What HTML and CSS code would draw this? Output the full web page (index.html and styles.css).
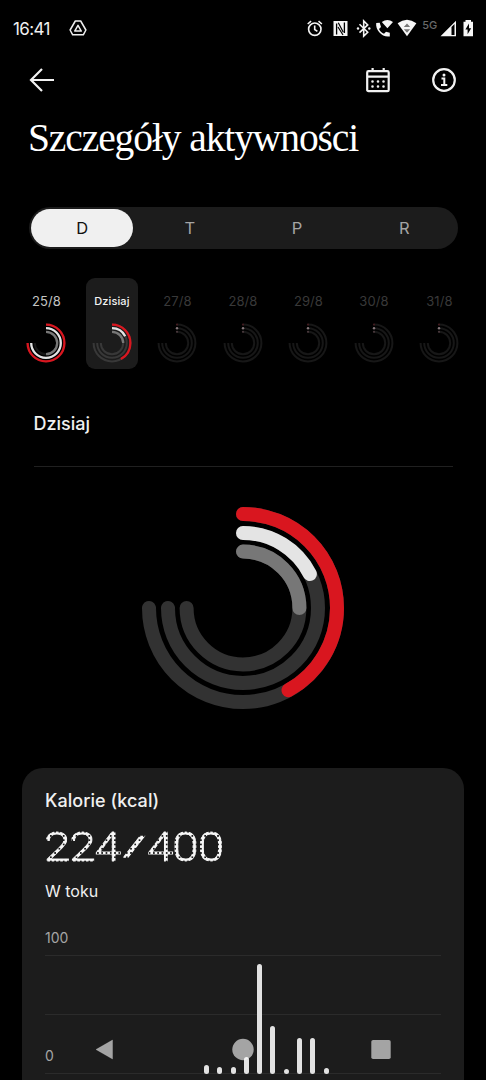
FILE: index.html
```html
<!DOCTYPE html>
<html lang="pl">
<head>
<meta charset="utf-8">
<meta name="viewport" content="width=device-width, initial-scale=1">
<title>Szczegóły aktywności</title>
<link rel="stylesheet" href="styles.css">
</head>
<body>
<svg class="defs" aria-hidden="true">
  <symbol id="tracks" viewBox="0 0 40 40">
    <g class="tracks" transform="rotate(-90 20 20)">
      <circle cx="20" cy="20" r="18.4" pathLength="360"/>
      <circle cx="20" cy="20" r="14.8" pathLength="360"/>
      <circle cx="20" cy="20" r="11.2" pathLength="360"/>
    </g>
  </symbol>
  <symbol id="idle" viewBox="0 0 40 40">
    <use href="#tracks"/>
    <circle cx="20" cy="1.6" r="1.1" fill="#421c20"/>
    <circle cx="20" cy="5.2" r="1.2" fill="#85777b"/>
    <circle cx="20" cy="8.8" r="1.1" fill="#49393d"/>
  </symbol>
</svg>
<div class="screen">
  <header class="status">
    <span class="clock">16:41</span>
    <svg class="drive" width="18" height="16" viewBox="0 0 18 16"><path d="M6.3 1h5.4l5.2 9-2.6 4.8H3.7L1.1 10z"/><path d="M9 5.3l3.3 5.8H5.7z"/></svg>
    <svg class="icons" width="190" height="24" viewBox="290 16 190 24">
      <g class="line"><circle cx="314.8" cy="29.2" r="6.2"/><path d="M314.7 25.5v4l2.7 1.8M307.7 24l3.4-2.8M321.9 24l-3.4-2.8"/></g>
      <path class="solid" d="M333.5 21h14v15h-14z"/>
      <path class="cut" d="M336.6 34.5V23.5M344.4 33V22.5"/>
      <path class="cut slant" d="M338.3 22.8l5 9.5M338 27l5 8"/>
      <g class="line"><path d="M359.5 24.3l8.2 8-4 3.8V21l4 3.9-8.2 7.8"/></g>
      <circle class="solid" cx="358" cy="28.5" r="1.2"/><circle class="solid" cx="369.3" cy="28.5" r="1.2"/>
      <path class="solid" d="M376.2 23l3.5-.3 1.3 4.2-2 2c1.2 2.4 2.8 3.9 5 4.9l2-2 3.8.9v3.7c-7.3 1.4-14.6-6-13.6-13.4zM381.8 22q5.6-4 11.2 0l-5.6 6.3z"/>
      <path class="solid" d="M397.6 23.2q9.4-7 18.8 0L407 36.3z"/>
      <path class="tri" d="M403.8 27l3.2-3.6 3.2 3.6zM403.8 29.3h6.4l-3.2 3.5z"/>
      <text class="net" x="422.3" y="29">5G</text>
      <path class="solid" fill-rule="evenodd" d="M440.5 36.3L456 20.8v15.5zM451.5 27v8h3V24z"/>
      <path class="solid" d="M465.5 20h5.5v1.8h2V36.3h-9.5V21.8h2z"/>
      <path class="cut fill" d="M469 23.5l-3.6 6h2.2v4.8l3.6-6h-2.2z"/>
    </svg>
  </header>
  <nav class="bar">
    <svg width="26" height="26" viewBox="0 0 26 26"><path d="M25 13H3M13 2L2 13l11 11"/></svg>
    <svg class="cal" width="26" height="26" viewBox="0 0 26 26"><rect x="2.2" y="4.2" width="21.5" height="20" rx="1.3"/><path d="M2.2 9.7h21.5M7.6 1v3M18.7 1v3"/><path class="dots" d="M7.5 14.5h.01M13 14.5h.01M18.5 14.5h.01M7.5 19.5h.01M13 19.5h.01M18.5 19.5h.01"/></svg>
    <svg width="26" height="26" viewBox="0 0 26 26"><circle cx="13" cy="13" r="10.8"/><path class="info" d="M10.5 11.6h2.8v6M10 18h6.3"/><circle class="solid" cx="13" cy="8.1" r="1.5"/></svg>
  </nav>
  <h1 class="title">Szczegóły aktywności</h1>
  <div class="tabs"><span class="tab active">D</span><span class="tab">T</span><span class="tab">P</span><span class="tab">R</span></div>
  <div class="days">
    <div class="day"><span>25/8</span>
      <svg class="mini" viewBox="0 0 40 40"><use href="#tracks"/><g transform="rotate(-90 20 20)" class="arcs"><circle class="red" cx="20" cy="20" r="18.4" pathLength="360" stroke-dasharray="270 360"/><circle class="white" cx="20" cy="20" r="14.8" pathLength="360" stroke-dasharray="270 360"/><circle class="gray" cx="20" cy="20" r="11.2" pathLength="360" stroke-dasharray="180 360"/></g></svg></div>
    <div class="day today"><span>Dzisiaj</span>
      <svg class="mini" viewBox="0 0 40 40"><use href="#tracks"/><g transform="rotate(-90 20 20)" class="arcs"><circle class="red" cx="20" cy="20" r="18.4" pathLength="360" stroke-dasharray="151 360"/><circle class="white" cx="20" cy="20" r="14.8" pathLength="360" stroke-dasharray="63 360"/><circle class="gray" cx="20" cy="20" r="11.2" pathLength="360" stroke-dasharray="90 360"/></g></svg></div>
    <div class="day off"><span>27/8</span><svg class="mini" viewBox="0 0 40 40"><use href="#idle"/></svg></div>
    <div class="day off"><span>28/8</span><svg class="mini" viewBox="0 0 40 40"><use href="#idle"/></svg></div>
    <div class="day off"><span>29/8</span><svg class="mini" viewBox="0 0 40 40"><use href="#idle"/></svg></div>
    <div class="day off"><span>30/8</span><svg class="mini" viewBox="0 0 40 40"><use href="#idle"/></svg></div>
    <div class="day off"><span>31/8</span><svg class="mini" viewBox="0 0 40 40"><use href="#idle"/></svg></div>
  </div>
  <h2 class="heading">Dzisiaj</h2>
  <svg class="ring" width="204" height="204" viewBox="-102 -102 204 204">
    <g transform="rotate(-90)">
      <g class="base"><circle r="94" pathLength="360"/><circle r="75" pathLength="360"/><circle r="56.4" pathLength="360"/></g>
      <circle class="red" r="94" pathLength="360" stroke-dasharray="151 360"/>
      <circle class="white" r="75" pathLength="360" stroke-dasharray="63 360"/>
      <circle class="gray" r="56.4" pathLength="360" stroke-dasharray="90 360"/>
    </g>
  </svg>
  <section class="card">
    <h3 class="name">Kalorie (kcal)</h3>
    <div class="value"><span class="slot"><span class="digits">224</span></span><span class="slot mid"><span class="slash">/</span></span><span class="slot"><span class="digits">400</span></span></div>
    <div class="state">W toku</div>
    <div class="chart">
      <div class="band top"><span>100</span></div>
      <div class="band"></div>
      <div class="band"><span>0</span></div>
      <div class="bars">
        <i style="height:9px"></i><i style="height:7.5px"></i><i style="height:7.5px"></i><i style="height:17px"></i><i style="height:110px"></i><i style="height:48.5px"></i><i style="height:5px"></i><i style="height:36px"></i><i style="height:36px"></i><i style="height:6px"></i>
      </div>
    </div>
  </section>
  <svg class="sysnav" width="486" height="60" viewBox="0 1020 486 60">
    <path d="M96 1049.5L112.500 1040V1059z" class="back"/>
    <circle cx="243" cy="1049.5" r="10.7"/>
    <rect x="371.3" y="1040" width="19.4" height="19" rx="1.8"/>
  </svg>
</div>
</body>
</html>
```
FILE: styles.css
```css
* { box-sizing: border-box; }
html, body { margin: 0; height: 1080px; overflow: hidden; background: #000; }
body { font-family: Inter, "Liberation Sans", sans-serif; color: #f0f0f0; }
svg { display: block; fill: none; flex: none; }
.defs { position: absolute; width: 0; height: 0; }
.screen { position: relative; width: 486px; height: 1080px; overflow: hidden; display: flex; flex-direction: column; }

.status { height: 56px; flex: none; display: flex; align-items: center; padding: 0 6px 0 13px; }
.clock { width: 56px; font-size: 17px; letter-spacing: -0.6px; line-height: 20px; padding-top: 2px; }
.drive { stroke: #eee; stroke-width: 1.5; stroke-linejoin: round; }
.icons { margin-left: auto; }
.line { stroke: #f4f4f4; stroke-width: 1.6; }
.solid { fill: #f6f6f6; stroke: none; }
.cut { stroke: #000; stroke-width: 1.3; }
.slant { stroke-width: 1.2; }
.fill { fill: #000; stroke: none; }
.tri { fill: #777; }
.net { fill: #696969; font-size: 11px; font-weight: 500; }

.bar { height: 50px; flex: none; display: flex; align-items: center; padding: 0 30px 2px 29px; }
.bar svg { stroke: #f2f2f2; stroke-width: 2.2; }
.bar .cal { margin-left: auto; margin-right: 40px; }
.bar svg:last-child { margin-right: -0.5px; }
.bar .dots { stroke-width: 2.6; stroke-linecap: round; }
.bar .info { stroke-width: 2; }
.bar .solid { stroke: none; }

.title { margin: 9px 0 0 28px; height: 49px; flex: none; font: 400 39.5px/46px "Liberation Serif", serif; letter-spacing: -1.1px; white-space: nowrap; color: #fff; }

.tabs { flex: none; margin: 43px 28px 0 29px; height: 42px; border-radius: 21px; background: #1c1c1c; display: grid; grid-template-columns: repeat(4, 1fr); }
.tab { display: flex; align-items: center; justify-content: center; font-size: 16.5px; color: #a4a4a4; }
.active { margin: 2px 3px 2px 2px; border-radius: 20px; background: #f0f0f0; color: #111; }

.days { flex: none; margin: 29px 0 0 13.7px; display: grid; grid-template-columns: repeat(7, 65.5px); justify-items: center; height: 92px; }
.day { width: 52.5px; height: 91px; border-radius: 9px; padding-top: 15px; display: flex; flex-direction: column; align-items: center; gap: 14px; font-size: 13px; line-height: 16px; letter-spacing: 0.1px; color: #c4c4c4; }
.today { background: #1c1c1c; color: #f4f4f4; font-size: 11px; font-weight: 500; --track: #383838; }
.off { color: #393939; }
.mini { width: 40px; height: 40px; overflow: visible; }
.tracks { stroke: var(--track, #171717); stroke-width: 2; stroke-dasharray: 270 360; }
.arcs { stroke-width: 2.3; }
.red { stroke: #d9161f; }
.white { stroke: #e4e4e4; }
.gray { stroke: #777; }

.heading { flex: none; margin: 34px 33px 0 33.5px; height: 63px; padding-top: 8px; border-bottom: 1px solid #202020; font-size: 18px; line-height: 24px; font-weight: 500; }
.ring { margin: 38.5px auto 0; stroke-width: 14; stroke-linecap: round; }
.base { stroke: #323232; stroke-dasharray: 270 360; }

.card { flex: none; margin: 58.5px 22px 0; height: 340px; padding: 21px 23px; border-radius: 21px; background: #1c1c1c; }
.name { margin: 0; font-size: 18px; line-height: 24px; font-weight: 500; letter-spacing: 0.05px; }

/* Digits are filled with a dot grid; six dot columns equal one character advance. */
.value { margin: 15px 0 0 -0.8px; height: 38px; display: flex; font-family: Roboto, sans-serif; line-height: 38px; }
.slot { width: 77.04px; }
.slot.mid { width: 25.68px; }
.digits, .slash {
  display: block; height: 38px; font-kerning: none; color: transparent;
  transform-origin: left; -webkit-background-clip: text; background-clip: text;
}
.digits {
  width: 70px; font-size: 41px; font-weight: 300; letter-spacing: -0.88px;
  transform: scaleX(1.16);
  -webkit-text-stroke: 0.9px transparent;
  background-image: radial-gradient(ellipse 1.95px 2.25px at center, #f8f8f8 88%, transparent 100%);
  background-size: 3.69px 4.28px; background-position: -1.48px -0.62px;
}
.slash {
  width: 14px; font-size: 28px; font-weight: 400; margin-left: 1.3px;
  transform: scaleX(2);
  -webkit-text-stroke: 0.7px transparent;
  background-image: radial-gradient(ellipse 1.13px 2.25px at center, #f8f8f8 88%, transparent 100%);
  background-size: 2.14px 4.28px; background-position: -0.25px -0.62px;
}
.state { margin-top: 14px; font-size: 16px; line-height: 22px; }
.chart { position: relative; margin-top: 23px; }
.band { height: 59px; border-bottom: 1px solid #2b2b2b; font-size: 14px; color: #a5a5a5; display: flex; align-items: flex-end; padding-bottom: 8px; line-height: 18px; }
.band.top { height: 31px; }
.bars { position: absolute; left: 159px; bottom: 0; display: flex; align-items: flex-end; gap: 8.3px; }
.bars i { width: 5px; border-radius: 2.5px; background: #e2e2e2; }
.sysnav { position: absolute; left: 0; bottom: 0; fill: rgba(255,255,255,.6); }
.back { stroke: rgba(255,255,255,.2); stroke-linejoin: round; }
```
